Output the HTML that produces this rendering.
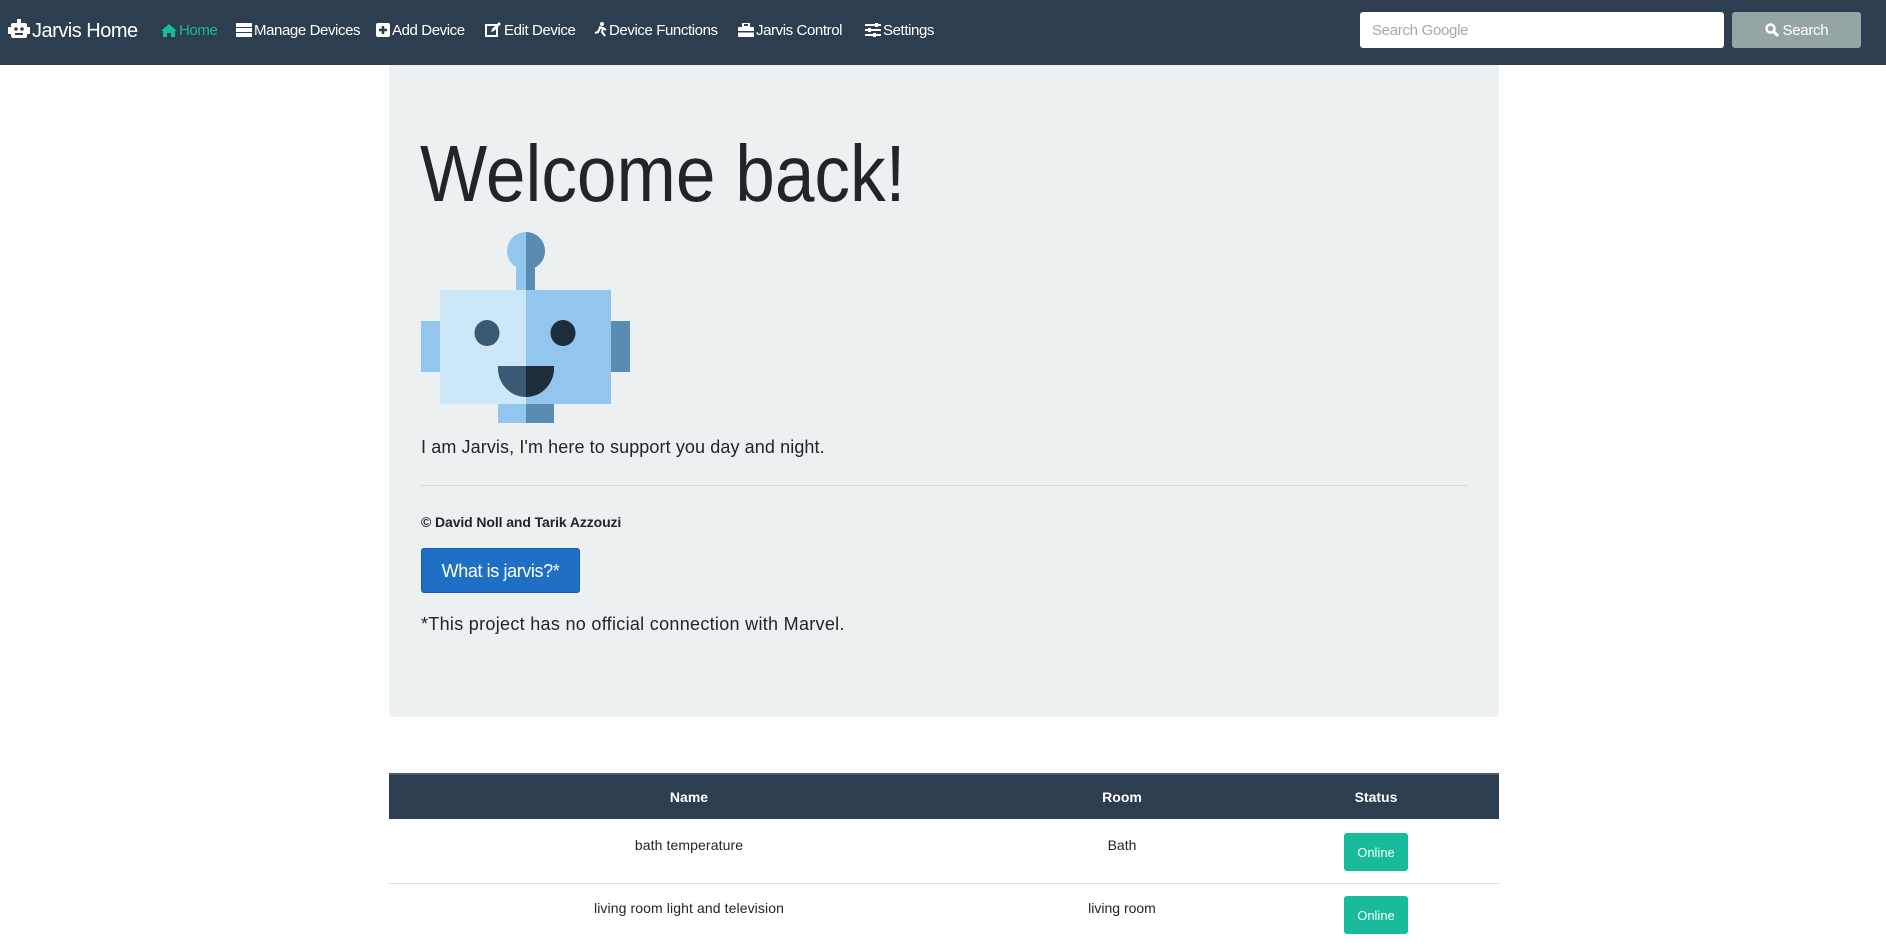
<!DOCTYPE html>
<html><head><meta charset="utf-8"><style>
*{margin:0;padding:0;box-sizing:border-box}
body{width:1886px;height:952px;overflow:hidden;background:#fff;font-family:"Liberation Sans",sans-serif;color:#212529;position:relative}
.a{position:absolute;white-space:nowrap}
.nav{position:absolute;left:0;top:0;width:1886px;height:65px;background:#2c3e50}
.nl{position:absolute;top:22px;font-size:15px;color:#fff;letter-spacing:-0.4px;line-height:18px}
.nl svg{vertical-align:-2px;margin-right:2px}
.c{text-align:center;transform:translateX(-50%)}
</style></head><body>
<div class="nav">
  <div class="nl" style="left:8px;top:19px;font-size:20px;line-height:24px;letter-spacing:-0.5px">
    <svg width="22" height="20" viewBox="0 0 22 20"><rect x="9" y="0" width="4" height="4" fill="#fff"/><rect x="3" y="4" width="16" height="15" rx="2" fill="#fff"/><rect x="0" y="8" width="3" height="7" fill="#fff"/><rect x="19" y="8" width="3" height="7" fill="#fff"/><circle cx="8" cy="10" r="1.8" fill="#2c3e50"/><circle cx="14" cy="10" r="1.8" fill="#2c3e50"/><rect x="7" y="14" width="8" height="2" fill="#2c3e50"/></svg>Jarvis Home</div>
  <div class="nl" style="left:161px;color:#18bc9c"><svg width="16" height="13" viewBox="0 0 16 13"><path d="M8 0L0 7h2v6h4V9h4v4h4V7h2z" fill="#18bc9c"/></svg>Home</div>
  <div class="nl" style="left:236px"><svg width="16" height="14" viewBox="0 0 16 14"><rect y="0" width="16" height="4" fill="#fff"/><rect y="5" width="16" height="4" fill="#fff"/><rect y="10" width="16" height="4" fill="#fff"/></svg>Manage Devices</div>
  <div class="nl" style="left:376px"><svg width="14" height="14" viewBox="0 0 14 14"><rect width="14" height="14" rx="2" fill="#fff"/><path d="M7 3v8M3 7h8" stroke="#2c3e50" stroke-width="2.5"/></svg>Add Device</div>
  <div class="nl" style="left:485px"><svg width="17" height="15" viewBox="0 0 17 15"><rect x="1" y="3" width="11" height="11" fill="none" stroke="#fff" stroke-width="2"/><path d="M6 10l1-3 7-7 2 2-7 7z" fill="#fff"/></svg>Edit Device</div>
  <div class="nl" style="left:594px"><svg width="13" height="15" viewBox="0 0 13 15"><circle cx="8" cy="2" r="2" fill="#fff"/><path d="M5 5l4 1-1 4 3 4M6 6l-2 4-3 1M9 6l3 2" stroke="#fff" stroke-width="2" fill="none"/></svg>Device Functions</div>
  <div class="nl" style="left:738px"><svg width="16" height="14" viewBox="0 0 16 14"><rect x="5" y="0" width="6" height="4" fill="none" stroke="#fff" stroke-width="2"/><rect y="4" width="16" height="10" rx="1" fill="#fff"/><rect x="0" y="8" width="16" height="1.5" fill="#2c3e50"/></svg>Jarvis Control</div>
  <div class="nl" style="left:865px"><svg width="16" height="14" viewBox="0 0 16 14"><path d="M0 2h16M0 7h16M0 12h16" stroke="#fff" stroke-width="2"/><rect x="10" y="0" width="3" height="4" fill="#fff"/><rect x="3" y="5" width="3" height="4" fill="#fff"/><rect x="8" y="10" width="3" height="4" fill="#fff"/></svg>Settings</div>
  <div class="a" style="left:1360px;top:12px;width:364px;height:36px;background:#fff;border-radius:3px;padding:10px 12px;font-size:15px;color:#a0aab2;letter-spacing:-0.3px">Search Google</div>
  <div class="a" style="left:1732px;top:12px;width:129px;height:36px;background:#95a5a6;border-radius:3px;color:#fff;font-size:15px;text-align:center;padding-top:10px;letter-spacing:-0.3px"><svg width="14" height="14" viewBox="0 0 14 14" style="vertical-align:-2px"><circle cx="5.5" cy="5.5" r="4" fill="none" stroke="#fff" stroke-width="2.4"/><path d="M8.5 8.5L13 13" stroke="#fff" stroke-width="3"/></svg> Search</div>
</div>

<div class="a" style="left:389px;top:65px;width:1110px;height:652px;background:#ecf0f1;border-radius:0 0 6px 6px"></div>
<div class="a" style="left:420px;top:129px;font-size:80px;line-height:90px;color:#212529;transform:scaleX(0.89);transform-origin:left">Welcome back!</div>

<svg class="a" style="left:0;top:0" width="1886" height="952">
  <circle cx="526" cy="251" r="19" fill="#93c6ef"/>
  <path d="M526 232a19 19 0 0 1 0 38z" fill="#5a8bb0"/>
  <rect x="516" y="268" width="10" height="22" fill="#93c6ef"/><rect x="526" y="268" width="9" height="22" fill="#5a8bb0"/>
  <rect x="421" y="321" width="19" height="51" fill="#93c6ef"/>
  <rect x="611" y="321" width="19" height="51" fill="#5a8bb0"/>
  <rect x="440" y="290" width="86" height="114" fill="#cce7f8"/>
  <rect x="526" y="290" width="85" height="114" fill="#93c6ef"/>
  <rect x="498" y="404" width="28" height="19" fill="#93c6ef"/><rect x="526" y="404" width="28" height="19" fill="#5a8bb0"/>
  <ellipse cx="487" cy="333" rx="12.5" ry="13" fill="#3a5a74"/>
  <ellipse cx="563" cy="333" rx="12.5" ry="13" fill="#1f2d3a"/>
  <path d="M498 366h28v31a28 29 0 0 1 -28 -31z" fill="#3a5a74"/>
  <path d="M526 366h28a28 29 0 0 1 -28 31z" fill="#1f2d3a"/>
</svg>

<div class="a" style="left:421px;top:437px;font-size:18px;letter-spacing:0.1px">I am Jarvis, I'm here to support you day and night.</div>
<div class="a" style="left:421px;top:485px;width:1046px;height:1px;background:#d5d9da"></div>
<div class="a" style="left:421px;top:514px;font-size:14px;font-weight:bold;letter-spacing:-0.1px">© David Noll and Tarik Azzouzi</div>
<div class="a" style="left:421px;top:548px;width:159px;height:45px;background:#1f6fc5;border:1px solid #1a5fa8;border-radius:3px;color:#fff;font-size:18px;text-align:center;padding-top:12px;letter-spacing:-0.4px">What is jarvis?*</div>
<div class="a" style="left:421px;top:614px;font-size:18px;letter-spacing:0.3px">*This project has no official connection with Marvel.</div>

<div class="a" style="left:389px;top:773px;width:1110px;height:46px;background:#2c3e50;border-top:2px solid #4a5a6a"></div>
<div class="a c" style="left:689px;top:789px;font-size:14px;font-weight:bold;color:#fff">Name</div>
<div class="a c" style="left:1122px;top:789px;font-size:14px;font-weight:bold;color:#fff">Room</div>
<div class="a c" style="left:1376px;top:789px;font-size:14px;font-weight:bold;color:#fff">Status</div>
<div class="a c" style="left:689px;top:837px;font-size:14px;letter-spacing:0.1px">bath temperature</div>
<div class="a c" style="left:1122px;top:837px;font-size:14px">Bath</div>
<div class="a" style="left:1344px;top:833px;width:64px;height:38px;background:#18bc9c;border-radius:3px;color:#fff;font-size:13px;text-align:center;padding-top:12px">Online</div>
<div class="a" style="left:389px;top:883px;width:1110px;height:1px;background:#dee2e6"></div>
<div class="a c" style="left:689px;top:900px;font-size:14px;letter-spacing:0.1px">living room light and television</div>
<div class="a c" style="left:1122px;top:900px;font-size:14px">living room</div>
<div class="a" style="left:1344px;top:896px;width:64px;height:38px;background:#18bc9c;border-radius:3px;color:#fff;font-size:13px;text-align:center;padding-top:12px">Online</div>
</body></html>
